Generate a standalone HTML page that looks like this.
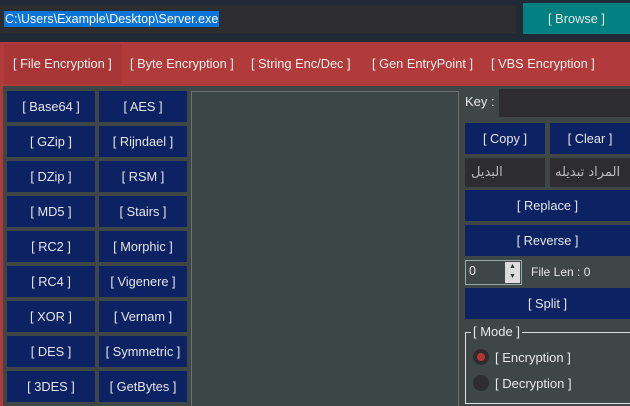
<html><head><style>
*{margin:0;padding:0;box-sizing:border-box}
html,body{width:630px;height:406px;overflow:hidden}
body{background:#202a36;font-family:"Liberation Sans","DejaVu Sans",sans-serif;position:relative;font-size:12.5px;color:#e8e8e8}
.a{position:absolute}
.b{position:absolute;background:#0c2263;color:#e6e6e6;display:flex;align-items:center;justify-content:center;font-size:12.8px}
.t{position:absolute;background:#2d2d30;color:#bbb;display:flex;align-items:center;font-size:13px}
.tab{position:absolute;top:56px;font-size:12.8px;color:#f0f0f0}
</style></head><body>
<div class="t" style="left:0;top:5px;width:516px;height:28px"><span style="background:#0a74d8;color:#fff;margin-left:4px;padding:0 1px;line-height:16px;font-size:12.5px">C:\Users\Example\Desktop\Server.exe</span></div>
<div class="a" style="left:523px;top:3px;width:107px;height:31px;background:#008080;color:#e6e6e6;display:flex;align-items:center;justify-content:center;font-size:12.8px">[ Browse ]</div>
<div class="a" style="left:0;top:42px;width:630px;height:44px;background:#b13a3a"></div>
<div class="a" style="left:4px;top:44px;width:118px;height:40px;background:#a83636"></div>
<div class="tab" style="left:13px">[ File Encryption ]</div>
<div class="tab" style="left:130px">[ Byte Encryption ]</div>
<div class="tab" style="left:251px">[ String Enc/Dec ]</div>
<div class="tab" style="left:372px">[ Gen EntryPoint ]</div>
<div class="tab" style="left:491px">[ VBS Encryption ]</div>
<div class="a" style="left:0;top:86px;width:630px;height:330px;background:#3f4646"></div>
<div class="a" style="left:0;top:86px;width:3px;height:330px;background:#b13a3a"></div>
<div class="a" style="left:191px;top:91px;width:268px;height:330px;background:#3d4646;border:1px solid #6a7272"></div>
<div class="b" style="left:7px;top:91px;width:88px;height:31px">[ Base64 ]</div>
<div class="b" style="left:99px;top:91px;width:88px;height:31px">[ AES ]</div>
<div class="b" style="left:7px;top:126px;width:88px;height:31px">[ GZip ]</div>
<div class="b" style="left:99px;top:126px;width:88px;height:31px">[ Rijndael ]</div>
<div class="b" style="left:7px;top:161px;width:88px;height:31px">[ DZip ]</div>
<div class="b" style="left:99px;top:161px;width:88px;height:31px">[ RSM ]</div>
<div class="b" style="left:7px;top:196px;width:88px;height:31px">[ MD5 ]</div>
<div class="b" style="left:99px;top:196px;width:88px;height:31px">[ Stairs ]</div>
<div class="b" style="left:7px;top:231px;width:88px;height:31px">[ RC2 ]</div>
<div class="b" style="left:99px;top:231px;width:88px;height:31px">[ Morphic ]</div>
<div class="b" style="left:7px;top:266px;width:88px;height:31px">[ RC4 ]</div>
<div class="b" style="left:99px;top:266px;width:88px;height:31px">[ Vigenere ]</div>
<div class="b" style="left:7px;top:301px;width:88px;height:31px">[ XOR ]</div>
<div class="b" style="left:99px;top:301px;width:88px;height:31px">[ Vernam ]</div>
<div class="b" style="left:7px;top:336px;width:88px;height:31px">[ DES ]</div>
<div class="b" style="left:99px;top:336px;width:88px;height:31px">[ Symmetric ]</div>
<div class="b" style="left:7px;top:371px;width:88px;height:31px">[ 3DES ]</div>
<div class="b" style="left:99px;top:371px;width:88px;height:31px">[ GetBytes ]</div>
<div class="a" style="left:465px;top:94px;font-size:13px">Key :</div>
<div class="t" style="left:499px;top:89px;width:131px;height:28px"></div>
<div class="b" style="left:465px;top:123px;width:80px;height:31px">[ Copy ]</div>
<div class="b" style="left:550px;top:123px;width:80px;height:31px">[ Clear ]</div>
<div class="t" style="left:465px;top:158px;width:80px;height:29px;padding-left:6px;font-family:'DejaVu Sans',sans-serif">البديل</div>
<div class="t" style="left:550px;top:158px;width:80px;height:29px;padding-left:5px;font-family:'DejaVu Sans',sans-serif">المراد تبديله</div>
<div class="b" style="left:465px;top:190px;width:165px;height:31px">[ Replace ]</div>
<div class="b" style="left:465px;top:225px;width:165px;height:31px">[ Reverse ]</div>
<div class="a" style="left:465px;top:260px;width:57px;height:25px;background:#3f4646;border:1px solid #9aa;padding:3px 3px;font-size:12.5px">0</div>
<div class="a" style="left:505px;top:262px;width:15px;height:21px;background:#ddd;font-size:7px;color:#333;text-align:center;line-height:10px">▲<br>▼</div>
<div class="a" style="left:531px;top:265px;font-size:12px">File Len : 0</div>
<div class="b" style="left:465px;top:288px;width:165px;height:31px">[ Split ]</div>
<div class="a" style="left:465px;top:332px;width:170px;height:72px;border:1px solid #ddd"></div>
<div class="a" style="left:471px;top:324px;background:#3f4646;padding:0 2px;font-size:13px">[ Mode ]</div>
<div class="a" style="left:473px;top:349px;width:16px;height:16px;border-radius:50%;background:#2d2d30"></div>
<div class="a" style="left:477px;top:353px;width:8px;height:8px;border-radius:50%;background:#b53535"></div>
<div class="a" style="left:495px;top:350px;font-size:13px">[ Encryption ]</div>
<div class="a" style="left:473px;top:375px;width:16px;height:16px;border-radius:50%;background:#2d2d30"></div>
<div class="a" style="left:495px;top:376px;font-size:13px">[ Decryption ]</div>
</body></html>
